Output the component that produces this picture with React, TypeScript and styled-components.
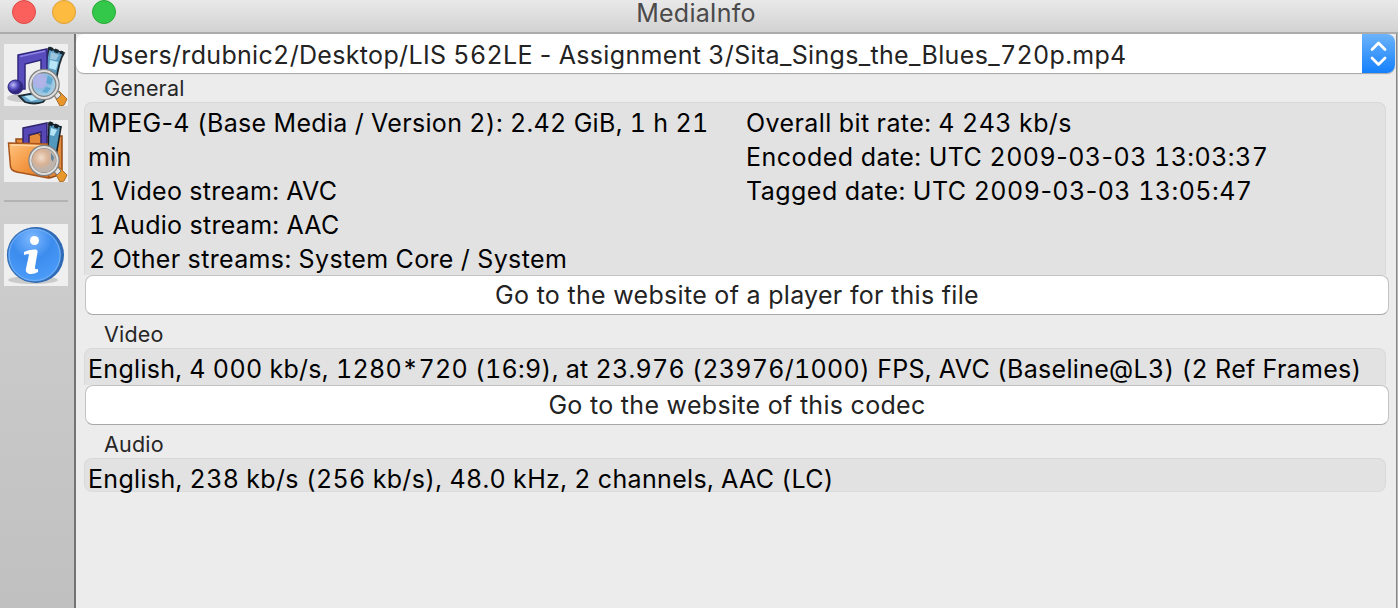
import React from "react";
import styled, { createGlobalStyle } from "styled-components";

const GlobalStyle = createGlobalStyle`
  html, body { margin: 0; padding: 0; overflow: hidden; }
  body {
    font-family: Inter, "Liberation Sans", sans-serif;
    font-feature-settings: "calt" 0, "tnum" 1;
    background: #ececec;
  }
  * { box-sizing: border-box; }
`;

const Window = styled.div`
  position: relative;
  width: 1398px;
  height: 608px;
  display: flex;
  flex-direction: column;
  background: #ececec;
  overflow: hidden;
`;

const TitleBar = styled.header`
  position: relative;
  flex: none;
  height: 34px;
  display: flex;
  align-items: flex-start;
  justify-content: center;
  background: linear-gradient(#e9e9e9, #d2d2d2);
  border-bottom: 2px solid #acacac;
`;

const Title = styled.h1`
  margin: 0 6px 0 0;
  font-size: 25px;
  font-weight: 400;
  line-height: 26px;
  letter-spacing: 0.2px;
  color: #4a4a4a;
`;

const Lights = styled.div`
  position: absolute;
  left: 12px;
  top: 0;
  display: flex;
  gap: 16px;
`;

const Light = styled.span<{ $fill: string; $edge: string }>`
  width: 24px;
  height: 24px;
  border-radius: 50%;
  background: ${(p) => p.$fill};
  border: 1px solid ${(p) => p.$edge};
`;

const Body = styled.div`
  flex: 1;
  display: flex;
  min-height: 0;
`;

const Sidebar = styled.nav`
  flex: none;
  width: 76px;
  padding: 10px 0 0 4px;
  display: flex;
  flex-direction: column;
  background: linear-gradient(#d5d5d5, #c0c0c0);
  border-right: 2px solid #737373;
`;

const Tool = styled.button`
  display: block;
  width: 64px;
  height: 62px;
  margin: 0 0 14px;
  padding: 0;
  border: 0;
  background: #efefef;
  svg { display: block; }
`;

const Divider = styled.hr`
  width: 64px;
  height: 2px;
  margin: 4px 0 22px;
  border: 0;
  background: #b3b3b3;
`;

const Main = styled.main`
  flex: 1;
  min-width: 0;
  display: flex;
  flex-direction: column;
`;

const Edge = styled.div`
  flex: none;
  width: 2px;
  background: linear-gradient(90deg, #858585 50%, #b9b9b9 50%);
`;

const Combo = styled.div`
  flex: none;
  display: flex;
  width: 1319px;
  height: 39px;
  border-radius: 8px;
  background: #fff;
  overflow: hidden;
  box-shadow: 0 1px 1px #a5a5a5;
`;

const Path = styled.span`
  flex: 1;
  padding: 2px 0 0 16px;
  font-size: 25px;
  line-height: 38px;
  white-space: nowrap;
  letter-spacing: 0.33px;
  color: #232323;
`;

const Stepper = styled.span`
  width: 33px;
  background: linear-gradient(#6cb3fa, #1480fc);
  svg { display: block; }
`;

const Legend = styled.h2`
  flex: none;
  height: 29px;
  margin: 0;
  padding: 1px 0 0 28px;
  font-size: 21.5px;
  font-weight: 400;
  line-height: 28px;
  letter-spacing: 0.2px;
  color: #262626;
`;

const Group = styled.section<{ $h: number; $closed?: boolean }>`
  flex: none;
  display: flex;
  width: 1302px;
  height: ${(p) => p.$h}px;
  margin-left: 8px;
  padding: 3px 0 0 3px;
  background: #e2e2e2;
  border: 1px solid #d8d8d8;
  border-bottom-color: ${(p) => (p.$closed ? "#dcdcdc" : "transparent")};
  border-radius: ${(p) => (p.$closed ? "8px" : "8px 8px 0 0")};
`;

const Column = styled.div<{ $w?: number }>`
  width: ${(p) => (p.$w ? `${p.$w}px` : "auto")};
`;

const Line = styled.div<{ $track?: number; $indent?: number }>`
  height: 34px;
  padding-left: ${(p) => p.$indent ?? 0}px;
  font-size: 25px;
  line-height: 34px;
  white-space: pre;
  letter-spacing: ${(p) => p.$track ?? 0.3}px;
  color: #000;
`;

const LinkButton = styled.button`
  flex: none;
  width: 1304px;
  height: 40px;
  margin: 0 0 4px 9px;
  padding: 0;
  border: 1px solid #c3c3c3;
  border-bottom-color: #a8a8a8;
  border-radius: 8px;
  background: #fff;
  font-family: inherit;
  font-size: 25px;
  line-height: 38px;
  letter-spacing: 0.3px;
  color: #232323;
`;

const Hyphen = styled.span`
  font-feature-settings: "calt" 0, "tnum" 0;
`;

// Digits are tabular, hyphens keep their proportional width.
const Text = ({ children }: { children: string }) => (
  <>
    {children.split("-").map((part, i) => (
      <React.Fragment key={i}>
        {i > 0 && <Hyphen>-</Hyphen>}
        {part}
      </React.Fragment>
    ))}
  </>
);

const Lens = () => (
  <g>
    <path d="M50 51l5-4 8 8-3 6-4 1z" fill="#e9972b" stroke="#a86d28" strokeWidth="1" />
    <path d="M49 50l4-4 4 5-4 4z" fill="#e4e4e0" stroke="#77777a" />
    <circle cx="40" cy="40.500" r="13.500" fill="url(#glass)" stroke="#818181" strokeWidth="4.500" />
    <circle cx="40" cy="40.500" r="13.500" fill="none" stroke="#dedede" strokeWidth="2" />
  </g>
);

const FileIcon = () => (
  <svg width="64" height="62" viewBox="0 0 64 62">
    <defs>
      <radialGradient id="glass" cx="40%" cy="40%">
        <stop offset="0" stopColor="#b9c4ee" />
        <stop offset=".5" stopColor="#8ab9e0" />
        <stop offset="1" stopColor="#a3cce2" />
      </radialGradient>
      <radialGradient id="ball" cx="35%" cy="35%">
        <stop offset="0" stopColor="#c0bcf8" />
        <stop offset=".6" stopColor="#574fc0" />
        <stop offset="1" stopColor="#302780" />
      </radialGradient>
    </defs>
    <ellipse cx="18" cy="54" rx="15" ry="4" fill="#ccc" />
    <path d="M45 4q7 3 15 5c-6 9-7 23-9 35l-12 14q-9 3-18 0l-6-6 21-4c6-12 5-30 9-44z" fill="#5f9fc6" stroke="#1c2930" strokeWidth="1.800" />
    <path d="M45 4q7 3 14 5" stroke="#18252d" strokeWidth="3.500" strokeDasharray="4 2" fill="none" />
    <path d="M46 16l8 2-2 8-7-2zM20 52l11-1 5 4-9 2z" fill="#b9e6f6" />
    <path d="M47 8l8 3-3 5-6-1z" fill="#9cc6dd" />
    <path d="M14 11L43 5V36H37V16L21 20V45H14z" fill="#594dbe" stroke="#30277e" strokeWidth="1.500" />
    <path d="M16 12.500l25-5.500" stroke="#8e83e4" strokeWidth="1.500" />
    <ellipse cx="11.500" cy="43" rx="7.500" ry="7" fill="url(#ball)" stroke="#30277e" />
    <Lens />
    <circle cx="36" cy="37" r="7.500" fill="#b1b2e8" opacity=".85" />
    <path d="M44 31l5 4-2 6-5-2zM42 43l5 1-4 5-5-1z" fill="#4fa0ce" opacity=".75" />
  </svg>
);

const FolderIcon = () => (
  <svg width="64" height="62" viewBox="0 0 64 62">
    <defs>
      <linearGradient id="folder" x1="0" y1="0" x2="1" y2="1">
        <stop offset="0" stopColor="#ffc47e" />
        <stop offset=".5" stopColor="#f49a46" />
        <stop offset="1" stopColor="#dc7420" />
      </linearGradient>
      <radialGradient id="folderGlass" cx="38%" cy="38%">
        <stop offset="0" stopColor="#f1dccb" />
        <stop offset=".6" stopColor="#d9b295" />
        <stop offset="1" stopColor="#bfb4ab" />
      </radialGradient>
    </defs>
    <path d="M12 22v-3h8l6-4 8-2 4 4 14-1h6v38l-12 4z" fill="#e58a3b" stroke="#914b18" strokeWidth="1.500" />
    <path d="M45 3l12 4-5 29-8-2z" fill="#5598bd" stroke="#151f26" strokeWidth="1.500" />
    <path d="M45 3l12 5" stroke="#131d25" strokeWidth="4" strokeDasharray="4 2" />
    <path d="M47 8l6 2-3 6-4-1z" fill="#b6e6f5" />
    <path d="M19 8L43 3V30H37V12L25 15V26H19z" fill="#5746b5" stroke="#30256f" strokeWidth="1.500" />
    <path d="M4.500 23l39 1 1 34-26-5q-11-1-12-6z" fill="url(#folder)" stroke="#aa571d" strokeWidth="1.500" />
    <path d="M7 25l35 1" stroke="#ffd5a3" strokeWidth="1.500" />
    <Lens />
    <circle cx="40" cy="40.500" r="12" fill="url(#folderGlass)" />
    <path d="M47 33l3 4-1 5-2-3z" fill="#65869c" />
  </svg>
);

const InfoIcon = () => (
  <svg width="64" height="62" viewBox="0 0 64 62">
    <defs>
      <radialGradient id="info" cx="45%" cy="20%" r="75%">
        <stop offset="0" stopColor="#7eb9ff" />
        <stop offset=".5" stopColor="#3c8cee" />
        <stop offset="1" stopColor="#4a9bf8" />
      </radialGradient>
    </defs>
    <ellipse cx="29" cy="56" rx="25" ry="4" fill="#cbcbcb" />
    <circle cx="32" cy="31" r="28" fill="#2d69b8" />
    <circle cx="30.500" cy="31" r="27" fill="url(#info)" stroke="#366dae" strokeWidth="1.200" />
    <circle cx="30.500" cy="31" r="25.500" fill="none" stroke="#77b0f5" strokeWidth="1" />
    <circle cx="30.500" cy="16.500" r="4.500" fill="#fff" />
    <path d="M20 28q5-3 12-2.500 2 .500 1.500 3L31 43q-.500 3 3 2v3q-5 3-10 1.500-3-1-2-5l3-14q0-1-5 .500z" fill="#fff" />
  </svg>
);

export default function App() {
  return (
    <Window>
      <GlobalStyle />
      <TitleBar>
        <Lights>
          <Light $fill="#fc605c" $edge="#dd4a46" />
          <Light $fill="#fdbc40" $edge="#dd9f34" />
          <Light $fill="#34c84a" $edge="#27a934" />
        </Lights>
        <Title>MediaInfo</Title>
      </TitleBar>
      <Body>
        <Sidebar>
          <Tool aria-label="Open file"><FileIcon /></Tool>
          <Tool aria-label="Open folder"><FolderIcon /></Tool>
          <Divider />
          <Tool aria-label="About"><InfoIcon /></Tool>
        </Sidebar>
        <Main>
          <Combo>
            <Path><Text>/Users/rdubnic2/Desktop/LIS 562LE - Assignment 3/Sita_Sings_the_Blues_720p.mp4</Text></Path>
            <Stepper>
              <svg width="33" height="39" viewBox="0 0 33 39" fill="none" stroke="#fff" strokeWidth="2.800" strokeLinecap="round" strokeLinejoin="round">
                <path d="M10 15.500l6.500-6.500 6.500 6.500M10 24l6.500 6.500 6.500-6.500" />
              </svg>
            </Stepper>
          </Combo>
          <Legend>General</Legend>
          <Group $h={173}>
            <Column $w={658}>
              <Line $track={0.32}><Text>MPEG-4 (Base Media / Version 2): 2.42 GiB, 1 h 21</Text></Line>
              <Line>min</Line>
              <Line $indent={1}>1 Video stream: AVC</Line>
              <Line $indent={1}>1 Audio stream: AAC</Line>
              <Line $indent={1} $track={0.36}>2 Other streams: System Core / System</Line>
            </Column>
            <Column>
              <Line $track={0.4}>Overall bit rate: 4 243 kb/s</Line>
              <Line $track={0.46}><Text>Encoded date: UTC 2009-03-03 13:03:37</Text></Line>
              <Line $track={0.46}><Text>Tagged date: UTC 2009-03-03 13:05:47</Text></Line>
            </Column>
          </Group>
          <LinkButton>Go to the website of a player for this file</LinkButton>
          <Legend>Video</Legend>
          <Group $h={37}>
            <Line>English, 4 000 kb/s, 1280*720 (16:9), at 23.976 (23976/1000) FPS, AVC (Baseline@L3) (2 Ref Frames)</Line>
          </Group>
          <LinkButton>Go to the website of this codec</LinkButton>
          <Legend>Audio</Legend>
          <Group $h={34} $closed>
            <Line $track={0.33}>English, 238 kb/s (256 kb/s), 48.0 kHz, 2 channels, AAC (LC)</Line>
          </Group>
        </Main>
        <Edge />
      </Body>
    </Window>
  );
}
